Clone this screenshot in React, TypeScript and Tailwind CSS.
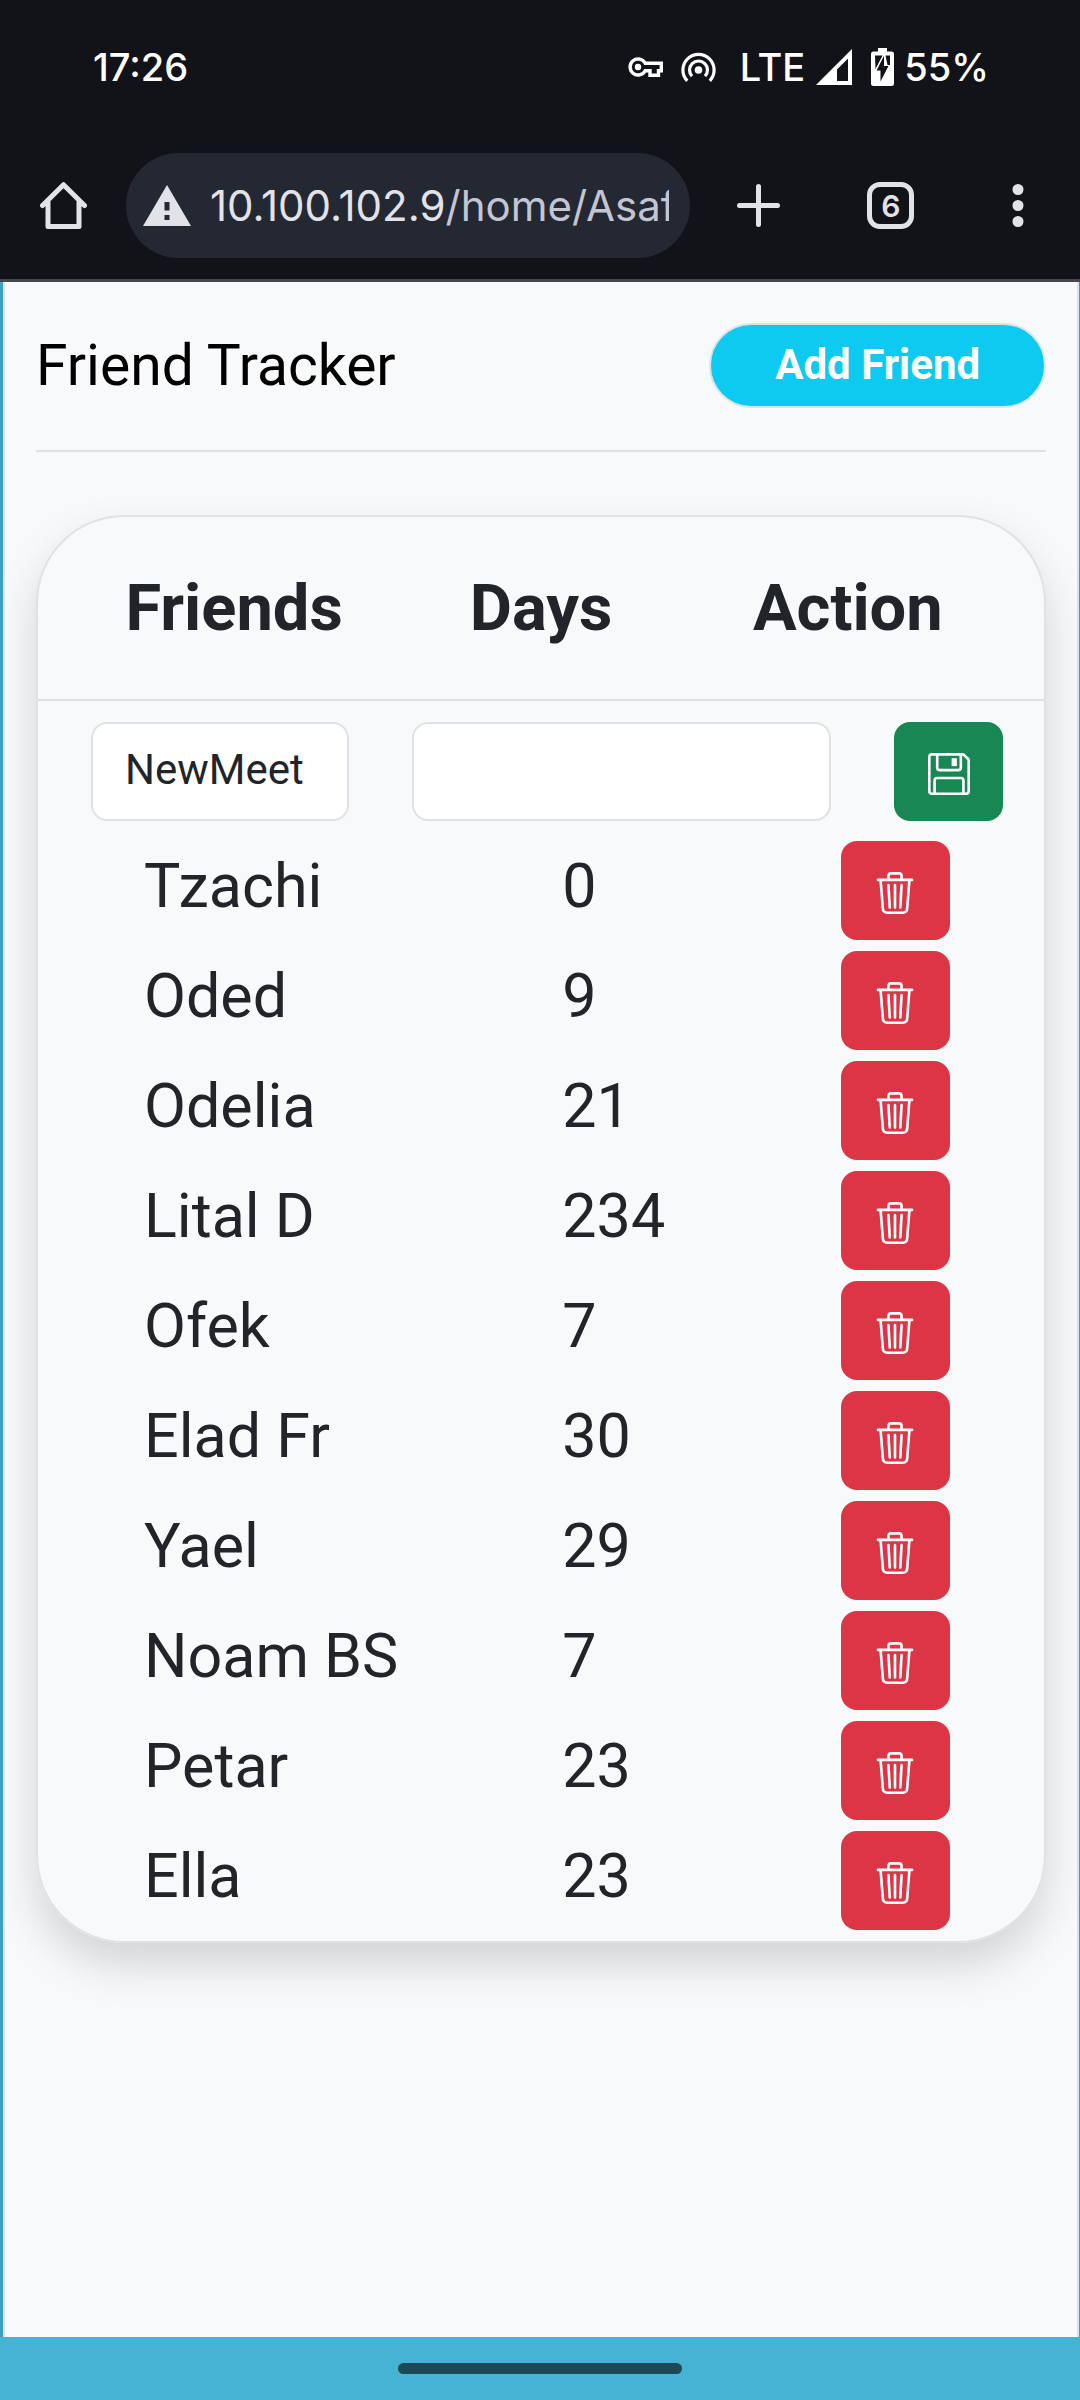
import { useState } from "react";
import { BsFloppy, BsTrash3 } from "react-icons/bs";

type Friend = { name: string; days: number };

const initialFriends: Friend[] = [
  { name: "Tzachi", days: 0 },
  { name: "Oded", days: 9 },
  { name: "Odelia", days: 21 },
  { name: "Lital D", days: 234 },
  { name: "Ofek", days: 7 },
  { name: "Elad Fr", days: 30 },
  { name: "Yael", days: 29 },
  { name: "Noam BS", days: 7 },
  { name: "Petar", days: 23 },
  { name: "Ella", days: 23 },
];

function StatusBar() {
  return (
    <div className="flex h-[134px] items-center pr-[91px] pl-[93px] font-[Inter,sans-serif] text-[38px] font-medium text-white">
      <span className="grow">17:26</span>
      <svg className="mr-[18px] h-[20px] w-[35px]" viewBox="0 0 35 20" fill="none" stroke="currentColor" strokeWidth="3.4" aria-label="VPN">
        <path d="M17.2 6.3A8 8 0 1 0 17.2 13.7H22V18.2H30.5V13.7H33.3V6.3Z" />
        <circle cx="10" cy="10" r="3.2" fill="currentColor" stroke="none" />
      </svg>
      <svg className="mr-[24px] h-[30px] w-[35px]" viewBox="0 0 35 30" fill="none" stroke="currentColor" strokeWidth="3.2" aria-label="Hotspot">
        <path d="M6.2 28.8A15.6 15.6 0 1 1 28.8 28.8" />
        <path d="M11 24.2A9 9 0 1 1 24 24.2" />
        <circle cx="17.5" cy="18" r="3.8" fill="currentColor" stroke="none" />
      </svg>
      <span className="mr-[11px]">LTE</span>
      <svg className="mr-[19px] h-[36px] w-[36px]" viewBox="0 0 36 36" aria-label="Signal">
        <path fill="currentColor" fillRule="evenodd" d="M36 0V36H0ZM32 9.5L21 20.5V32H32Z" />
      </svg>
      <svg className="mr-[10px] h-[38px] w-[23px]" viewBox="0 0 23 38" aria-label="Battery charging">
        <path fill="currentColor" d="M7 0h9v3.500h4.500A2.500 2.500 0 0 1 23 6v29.500A2.500 2.500 0 0 1 20.500 38h-18A2.500 2.500 0 0 1 0 35.500V6A2.500 2.500 0 0 1 2.500 3.500H7Z" />
        <path fill="#121318" d="M4 7.500h8L4.500 21.500Z M14.500 7.500H19v9.500h-2.500Z M13 7.500V18h4.500L9.500 33.500V22.500H5.500Z" />
        <path stroke="currentColor" strokeWidth="1.200" d="M12.500 7L5 21.500" />
      </svg>
      <span>55%</span>
    </div>
  );
}

function BrowserBar() {
  return (
    <div className="flex h-[145px] items-center pr-[36px] pb-[2px] pl-[40px] font-[Inter,sans-serif] text-[#e2e2e9]">
      <button type="button" aria-label="Home" className="mr-[39px]">
        <svg className="size-[47px]" viewBox="0 0 47 47" fill="none" stroke="currentColor" strokeWidth="5" strokeLinecap="round" strokeLinejoin="round">
          <path d="M2.500 23.500L23.500 2.700L44.500 23.500M8 20V44.500H39V20" />
        </svg>
      </button>
      <div className="flex h-[105px] min-w-0 grow items-center rounded-full bg-[#242833] pr-[21px] pl-[17px]">
        <svg className="mr-[19px] h-[41px] w-[48px] shrink-0" viewBox="0 0 48 41" aria-label="Not secure">
          <path fill="currentColor" fillRule="evenodd" d="M24 0L48 41H0ZM21.500 17V25.500H26.500V17ZM21.500 30V35H26.500V30Z" />
        </svg>
        <span className="min-w-0 overflow-hidden text-[42px] leading-[60px] whitespace-nowrap">
          10.100.102.9<span className="text-[#c3c5d3]">/home/Asaf</span>
        </span>
      </div>
      <button type="button" aria-label="New tab" className="ml-[47px]">
        <svg className="size-[43px]" viewBox="0 0 43 43" stroke="currentColor" strokeWidth="5" strokeLinecap="round">
          <path d="M21.500 2.500V40.500M2.500 21.500H40.500" />
        </svg>
      </button>
      <button
        type="button"
        aria-label="Switch tabs"
        className="ml-[87px] flex size-[47px] items-center justify-center rounded-[13px] border-[5px] border-[#e2e2e9] text-[30px] font-semibold"
      >
        6
      </button>
      <button type="button" aria-label="Menu" className="ml-[78px] px-[20px]">
        <svg className="h-[43px] w-[12px]" viewBox="0 0 12 43" fill="currentColor">
          <circle cx="6" cy="5.500" r="5.500" />
          <circle cx="6" cy="21.500" r="5.500" />
          <circle cx="6" cy="37.500" r="5.500" />
        </svg>
      </button>
    </div>
  );
}

export default function App() {
  const [friends, setFriends] = useState(initialFriends);
  const [name, setName] = useState("NewMeet");
  const [days, setDays] = useState("");

  const save = () => {
    if (name && days) {
      setFriends([{ name, days: Number(days) }, ...friends]);
      setDays("");
    }
  };

  return (
    <div className="flex min-h-screen flex-col bg-[#3ea2be] font-[Roboto,sans-serif] text-[42px] leading-[66px] text-[#212529]">
      <header className="border-b-[3px] border-[#47464f] bg-[#121318] leading-none">
        <StatusBar />
        <BrowserBar />
      </header>

      <main className="mr-px ml-[3px] grow border-x-2 border-[#dee2e6] bg-[#f8f9fb] px-[31px]">
        <div className="flex items-center justify-between border-b-2 border-[#dee2e6] pt-[41px] pb-[42px]">
          <h1 className="text-[57px] text-black">Friend Tracker</h1>
          <button
            type="button"
            className="h-[85px] w-1/3 rounded-full border-2 border-[#dee2e6] bg-[#0dcaf0] pb-[2px] leading-none font-bold text-white"
          >
            Add Friend
          </button>
        </div>

        <div className="mt-[63px] rounded-[88px] border-2 border-[#dee2e6] shadow-[0_22px_44px_rgba(0,0,0,0.15)]">
          <table className="w-full table-fixed border-collapse">
            <thead>
              <tr className="h-[183px] border-b-2 border-[#dee2e6] text-[65px] leading-[99px]">
                <th className="w-[39%] font-bold">Friends</th>
                <th className="w-[22%] font-bold">Days</th>
                <th className="w-[39%] font-bold">Action</th>
              </tr>
            </thead>
            <tbody>
              <tr>
                <td colSpan={3} className="pt-[21px] pr-[41px] pb-[20px] pl-[53px]">
                  <div className="flex gap-[63px]">
                    <input
                      aria-label="Friend name"
                      value={name}
                      onChange={(e) => setName(e.target.value)}
                      className="h-[99px] w-[258px] shrink-0 rounded-[16px] border-2 border-[#dee2e6] bg-white px-[32px] pb-[4px]"
                    />
                    <input
                      aria-label="Days"
                      value={days}
                      onChange={(e) => setDays(e.target.value)}
                      className="h-[99px] min-w-0 grow rounded-[16px] border-2 border-[#dee2e6] bg-white px-[32px] pb-[4px]"
                    />
                    <button
                      type="button"
                      aria-label="Save"
                      onClick={save}
                      className="flex h-[99px] w-[109px] shrink-0 items-center justify-center rounded-[16px] bg-[#198754] pt-1 text-white"
                    >
                      <BsFloppy />
                    </button>
                  </div>
                </td>
              </tr>
              {friends.map((friend) => (
                <tr key={friend.name} className="h-[110px] align-top text-[61px] leading-[90px]">
                  <td className="pl-[106px] whitespace-nowrap">{friend.name}</td>
                  <td className="pl-[132px]">{friend.days}</td>
                  <td className="pl-[189px]">
                    <button
                      type="button"
                      aria-label={`Delete ${friend.name}`}
                      onClick={() => setFriends(friends.filter((f) => f !== friend))}
                      className="flex h-[99px] w-[109px] items-center justify-center rounded-[16px] bg-[#dc3545] pt-1 text-[42px] text-white"
                    >
                      <BsTrash3 />
                    </button>
                  </td>
                </tr>
              ))}
            </tbody>
          </table>
        </div>
      </main>

      <footer className="flex h-[63px] items-center justify-center bg-[#45b3d3]">
        <div className="h-[11px] w-[284px] rounded-full bg-[#1c4857]" />
      </footer>
    </div>
  );
}
